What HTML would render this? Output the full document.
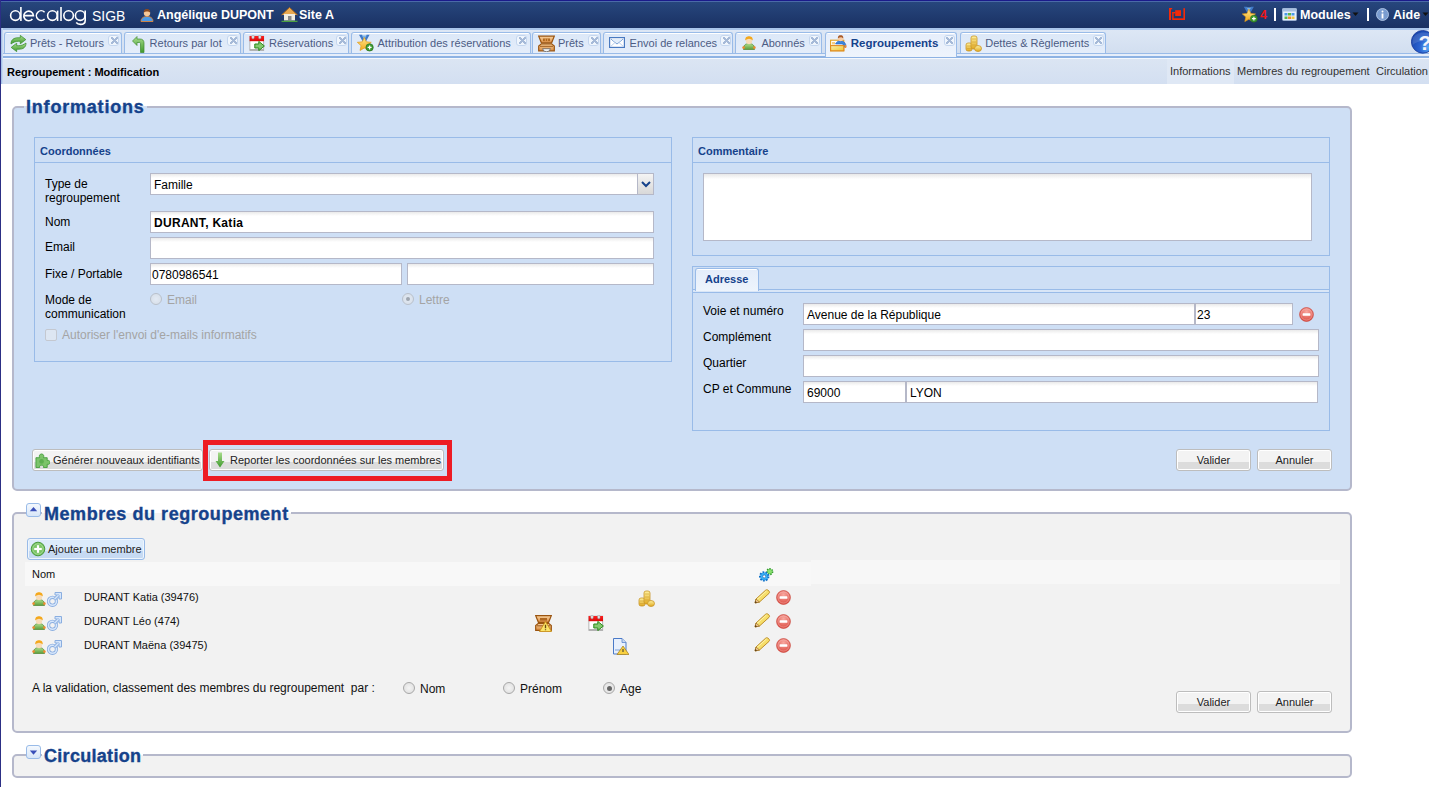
<!DOCTYPE html>
<html><head><meta charset="utf-8">
<style>
*{box-sizing:border-box;margin:0;padding:0}
html,body{width:1429px;height:790px;overflow:hidden;background:#fff;font-family:"Liberation Sans",sans-serif;color:#000}
.a{position:absolute}
.t{position:absolute;white-space:nowrap;line-height:14px}
/* header */
#lb{left:0;top:0;width:1px;height:787px;background:#2c2f85}
#hdr{left:1px;top:0;width:1428px;height:28px;background:linear-gradient(#27477e,#1a3163);border-top:1px solid #1b1b8a}
#hdr2{left:1px;top:1px;width:1428px;height:1px;background:#4a6aa8}
.hw{color:#fff;font-weight:bold;font-size:12.5px;top:8px !important}
/* tabs */
#strip{left:1px;top:28px;width:1428px;height:29px;background:linear-gradient(#a9c5ea 0,#a9c5ea 2px,#dde7f5 2px,#d0ddef 100%)}
.tab{position:absolute;top:32px;height:21px;border:1px solid #99bbe8;border-bottom:none;border-radius:3px 3px 0 0;background:linear-gradient(#fff 0,#fff 1px,#dce8f8 1px,#e4edfa 100%)}
.tab .tx{position:absolute;top:3px;font-size:11px;color:#4c5b84;white-space:nowrap;line-height:14px}
.tab .cl{position:absolute;top:2px;width:11px;height:11px;border:1px solid #c4d6ef;border-radius:3px;background:#f0f6fd}
.tab .cl::after{content:"";position:absolute;left:1.5px;top:1px;width:7px;height:7px;background:linear-gradient(45deg,transparent 39%,#a6bad8 39%,#a6bad8 61%,transparent 61%),linear-gradient(-45deg,transparent 39%,#a6bad8 39%,#a6bad8 61%,transparent 61%)}
#stripb{left:1px;top:53px;width:1428px;height:6px;background:linear-gradient(#99bbe8 0,#99bbe8 1px,#e6eefa 1px,#e6eefa 3px,#8db2e3 3px,#8db2e3 5px,#f4f8fd 5px)}
#sub{left:1px;top:59px;width:1428px;height:25px;background:linear-gradient(#dbe5f3,#d3dff1)}
/* fieldsets */
.fs{position:absolute;border:2px solid #b5b8cb;border-radius:5px}
.lg{position:absolute;font-size:18px;font-weight:bold;color:#15428b;-webkit-text-stroke:0.35px #15428b;white-space:nowrap;line-height:20px;padding:0 2px}
.ifs{position:absolute;border:1px solid #99bbe8}
.ih{position:absolute;left:0;top:24px;width:100%;height:1px;background:#99bbe8}
.iht{position:absolute;left:5px;top:6px;font-size:11px;font-weight:bold;color:#15428b;line-height:14px;white-space:nowrap}
.inp{position:absolute;height:22px;border:1px solid #b5b8c8;background:linear-gradient(#eaeaea 0,#fff 4px,#fff 100%);font-size:12px;line-height:23px;padding-left:3px;white-space:nowrap;overflow:hidden}
.lbl{position:absolute;font-size:12px;line-height:14px;color:#000;white-space:nowrap}
.btn{position:absolute;height:22px;border:1px solid #bdbdbd;border-radius:3px;box-shadow:inset 0 0 0 1px #fff;background:linear-gradient(#f3f3f3 0,#f3f3f3 58%,#dcdcdc 58%,#dcdcdc 100%);font-size:11px;line-height:20px;color:#222;white-space:nowrap;text-align:center}
.ti{position:absolute}
.tab.act{height:25px;z-index:2;background:linear-gradient(#fff 0,#fff 1px,#e6eefb 1px,#eef4fc 100%)}
.tab.act .tx{font-weight:bold;color:#15428b;font-size:11.5px}
.col{position:absolute;width:15px;height:14px;border:1px solid #99bbe8;border-radius:3px;background:linear-gradient(#f4f8fe,#d8e6f8)}
.col svg{position:absolute;left:0;top:0}
.rad{position:absolute;width:12px;height:12px;border-radius:50%;border:1px solid #a8a8a8;background:radial-gradient(#f4f4f4,#dcdcdc)}
</style></head><body>
<svg width="0" height="0" style="position:absolute">
<defs>
<linearGradient id="gg" x1="0" y1="0" x2="0" y2="1"><stop offset="0" stop-color="#a8dc8c"/><stop offset="1" stop-color="#3f9a2e"/></linearGradient>
<linearGradient id="yy" x1="0" y1="0" x2="0" y2="1"><stop offset="0" stop-color="#fff2a0"/><stop offset="1" stop-color="#e0a820"/></linearGradient>
<symbol id="i-sync" viewBox="0 0 17 17"><path d="M1 9 C1 4.5 4 2.8 8 2.8 H10.3 V0.4 L15.8 4.6 L10.3 8.8 V6.3 H8.2 C5.6 6.3 3.5 7.2 1 9Z" fill="url(#gg)" stroke="#3e9030" stroke-width="0.8" stroke-linejoin="round"/><path d="M16 8 C16 12.5 13 14.2 9 14.2 H6.7 V16.6 L1.2 12.4 L6.7 8.2 V10.7 H8.8 C11.4 10.7 13.5 9.8 16 8Z" fill="url(#gg)" stroke="#3e9030" stroke-width="0.8" stroke-linejoin="round"/></symbol>
<symbol id="i-ret" viewBox="0 0 13 17"><path d="M0.5 5 L5 0.5 L5 3 L8 3 C10.5 3 12 4.5 12 7 L12 16.5 L8.5 16.5 L8.5 7.5 C8.5 6.8 8 6.5 7.5 6.5 L5 6.5 L5 9.5Z" fill="url(#gg)" stroke="#3f8a2e" stroke-width="0.7"/></symbol>
<symbol id="i-cal" viewBox="0 0 16 16"><rect x="0.9" y="1.2" width="13.8" height="14.3" fill="#fff" stroke="#a4a4a4" stroke-width="0.8"/><rect x="0.9" y="14" width="13.8" height="1.5" fill="#b0b0b0"/><linearGradient id="cr" x1="0" y1="0" x2="0" y2="1"><stop offset="0" stop-color="#ff2020"/><stop offset="1" stop-color="#d80808"/></linearGradient><rect x="0.6" y="1" width="14.4" height="5.2" fill="url(#cr)"/><rect x="2.8" y="0.2" width="2.4" height="3.6" rx="1" fill="#e4e8ec" stroke="#909090" stroke-width="0.5"/><rect x="9.6" y="0.2" width="2.4" height="3.6" rx="1" fill="#e4e8ec" stroke="#909090" stroke-width="0.5"/><path d="M5.8 9 H9.8 V6.4 L15.4 11 L9.8 15.6 V13 H5.8Z" fill="#86c870" stroke="#2a8a1a" stroke-width="1"/></symbol>
<symbol id="i-star" viewBox="0 0 17 18"><path d="M2 0.8 H5 L7.3 4.5 L9.6 0.8 H12.6 L9.2 7 H5.4 Z" fill="#3f78c8"/><path d="M4.8 1.5 H9.8 L7.3 5.5Z" fill="#7ab4e8"/><linearGradient id="sy" x1="0" y1="0" x2="0" y2="1"><stop offset="0" stop-color="#ffe890"/><stop offset="1" stop-color="#f0a818"/></linearGradient><path d="M7.30 3.30 L9.30 7.85 L14.24 8.34 L10.53 11.65 L11.59 16.51 L7.30 14.00 L3.01 16.51 L4.07 11.65 L0.36 8.34 L5.30 7.85Z" fill="url(#sy)" stroke="#e09a18" stroke-width="0.7" stroke-linejoin="round"/><circle cx="12.6" cy="13.4" r="3.7" fill="#3a9a30" stroke="#2a6a20" stroke-width="0.6"/><path d="M10.6 13.4h4M12.6 11.4v4" stroke="#fff" stroke-width="1.3"/></symbol>
<symbol id="i-trunk" viewBox="0 0 17 16"><linearGradient id="tg" x1="0" y1="0" x2="0" y2="1"><stop offset="0" stop-color="#fad4a0"/><stop offset="1" stop-color="#d88a40"/></linearGradient><path d="M0.7 0.7 H16.3 L13.6 7.3 H3.4 Z" fill="url(#tg)" stroke="#9a5410" stroke-width="1.2"/><rect x="5" y="3" width="7" height="2.6" fill="#b06820"/><path d="M7.3 3v2.6M9.6 3v2.6" stroke="#e8a860" stroke-width="0.8"/><path d="M3.4 8.3 H13.6 L16.3 10.6 V15.3 H0.7 V10.6 Z" fill="url(#tg)" stroke="#9a5410" stroke-width="1.2"/><path d="M2 10.8 H15" stroke="#9a5a20" stroke-width="1"/><path d="M4.6 13.2 H12.4 Q12 16.3 8.5 16.3 Q5 16.3 4.6 13.2Z" fill="#f4f4f4" stroke="#666" stroke-width="0.8"/></symbol>
<symbol id="i-mail" viewBox="0 0 16 11"><rect x="0.6" y="0.6" width="14.8" height="9.8" fill="#fff" stroke="#4a7ac0" stroke-width="1.2"/><path d="M2 2 L8 7 L14 2" fill="none" stroke="#6a96d0" stroke-width="1"/><path d="M2 9.2 L6 5.5 M14 9.2 L10 5.5" stroke="#a8c4ea" stroke-width="0.8"/><path d="M2.5 2 H13.5 L8 6.5Z" fill="#e4eefa"/></symbol>
<symbol id="i-user" viewBox="0 0 15 15"><path d="M0.5 14.5 C0.5 10 3 8.5 7.5 8.5 C12 8.5 14.5 10 14.5 14.5Z" fill="#6ab04a" stroke="#3a7a2a" stroke-width="0.8"/><ellipse cx="7.5" cy="5" rx="3.6" ry="4" fill="#f4c080" stroke="#c07a30" stroke-width="0.6"/><path d="M3.9 4 C4 1 6 0.5 7.5 0.5 C9 0.5 11 1 11.1 4Z" fill="#f09a20"/></symbol>
<symbol id="i-group" viewBox="0 0 17 17"><rect x="0.6" y="5.2" width="13.2" height="10.6" fill="#fff" stroke="#e0a020" stroke-width="1.1"/><path d="M5.5 9 C6.5 6.5 8.5 5.8 10.5 5.8 C12.8 5.8 14.8 6.8 15.8 9.8 L15.8 12 L13 12 L13 9Z" fill="#3a8ae0" stroke="#2a5ab8" stroke-width="0.6"/><rect x="14.6" y="10" width="1.8" height="3" rx="0.8" fill="#f08a30"/><circle cx="10.6" cy="3.6" r="2.6" fill="#f8cca4"/><path d="M7.8 3.4 C7.8 0.8 9.3 0.3 10.6 0.3 C12 0.3 13.4 0.8 13.4 3.4 C12.5 2.4 11.5 2.6 10.6 2.2 C9.7 2.6 8.7 2.4 7.8 3.4Z" fill="#a85a28"/><linearGradient id="fy" x1="0" y1="0" x2="1" y2="1"><stop offset="0" stop-color="#f8f0b0"/><stop offset="1" stop-color="#f0c830"/></linearGradient><rect x="0.6" y="10.6" width="13.2" height="5.2" fill="url(#fy)" stroke="#e08a20" stroke-width="1.1"/><rect x="2" y="7" width="3" height="2.5" fill="#f0c060" opacity="0.8"/></symbol>
<symbol id="i-coins" viewBox="0 0 17 17"><rect x="1" y="8" width="6" height="8" rx="2" fill="url(#yy)" stroke="#c8962a" stroke-width="0.8"/><rect x="6" y="1" width="6" height="13" rx="2" fill="url(#yy)" stroke="#c8962a" stroke-width="0.8"/><ellipse cx="13" cy="13.5" rx="3.5" ry="3" fill="url(#yy)" stroke="#c8962a" stroke-width="0.8"/><path d="M7 4h4M7 7h4M7 10h4M2 11h4M2 13.5h4" stroke="#d0a030" stroke-width="0.6"/></symbol>
<symbol id="i-minus" viewBox="0 0 15 15"><radialGradient id="rg" cx="0.5" cy="0.3" r="0.7"><stop offset="0" stop-color="#f8a8a0"/><stop offset="1" stop-color="#dc4a40"/></radialGradient><circle cx="7.5" cy="7.5" r="6.9" fill="url(#rg)" stroke="#c8443a" stroke-width="0.7"/><circle cx="7.5" cy="7.5" r="5.6" fill="none" stroke="#fff" stroke-width="0.6" opacity="0.45"/><rect x="3.6" y="6.3" width="7.8" height="2.5" rx="0.6" fill="#fff"/></symbol>
<symbol id="i-puzzle" viewBox="0 0 16 16"><path d="M1 5 L5 5 C4 3 5 1 7 1 C9 1 10 3 9 5 L13 5 L13 8 C15 7.5 16 8.5 16 10 C16 11.5 15 12.5 13 12 L13 15.5 L9 15.5 C9.5 13.5 8.5 13 7 13 C5.5 13 4.5 13.5 5 15.5 L1 15.5Z" fill="#7cc46a" stroke="#3e9a36" stroke-width="0.9"/><circle cx="7" cy="9" r="2.5" fill="#4aa040" opacity="0.6"/></symbol>
<symbol id="i-down" viewBox="0 0 10 16"><path d="M3 0.5 L7 0.5 L7 9 L9.5 9 L5 15.5 L0.5 9 L3 9Z" fill="url(#gg)"/></symbol>
<symbol id="i-plus" viewBox="0 0 16 16"><circle cx="8" cy="8" r="6.8" fill="#7ac466" stroke="#4a9a3e" stroke-width="1"/><circle cx="8" cy="8" r="5.2" fill="none" stroke="#a8dc98" stroke-width="0.8"/><rect x="6.9" y="4.2" width="2.2" height="7.6" fill="#fff"/><rect x="4.2" y="6.9" width="7.6" height="2.2" fill="#fff"/></symbol>
<symbol id="i-gear" viewBox="0 0 17 16"><circle cx="11.8" cy="4.6" r="2.6" fill="#6ad050" stroke="#2e9a2a" stroke-width="2" stroke-dasharray="1.3 1"/><circle cx="11.8" cy="4.6" r="2.2" fill="#8ae070"/><circle cx="6.2" cy="9.4" r="4" fill="#2aa0f0" stroke="#1070c8" stroke-width="2.4" stroke-dasharray="1.6 1.2"/><circle cx="6.2" cy="9.4" r="3.3" fill="#3ab0f8"/><circle cx="6.2" cy="9.4" r="1.5" fill="#fff" stroke="#1a5aa8" stroke-width="0.6"/></symbol>
<symbol id="i-male" viewBox="0 0 15 15"><circle cx="5.5" cy="9.3" r="4" fill="none" stroke="#8aaee0" stroke-width="3.2"/><circle cx="5.5" cy="9.3" r="4" fill="none" stroke="#d6e6fb" stroke-width="1.6"/><path d="M7.5 7.3 L11.5 3.3" stroke="#8aaee0" stroke-width="3.2"/><path d="M8 0.5 H14.5 V7 L12 7 L12 3 L8 3Z" fill="#d6e6fb" stroke="#8aaee0" stroke-width="1"/><path d="M7.5 7.3 L11.5 3.3" stroke="#d6e6fb" stroke-width="1.4"/></symbol>
<symbol id="i-pers2" viewBox="0 0 14 14"><linearGradient id="gb" x1="0" y1="0" x2="0" y2="1"><stop offset="0" stop-color="#b4e090"/><stop offset="1" stop-color="#5a9e3c"/></linearGradient><path d="M1.5 13.5 C1 9.5 3.5 7.5 7 7.5 C10.5 7.5 13 9.5 12.5 13.5Z" fill="url(#gb)" stroke="#5a8e3a" stroke-width="0.8"/><circle cx="1.6" cy="11.6" r="1.3" fill="#f08a30"/><circle cx="12.4" cy="11.6" r="1.3" fill="#f08a30"/><rect x="4" y="2.5" width="6" height="5.5" rx="2" fill="#f8dcb8"/><path d="M3.2 4.5 C3.2 1 5 0.3 7 0.3 C9 0.3 10.8 1 10.8 4.5 C9.5 3 8 3.5 7 2.8 C6 3.5 4.5 3 3.2 4.5Z" fill="#f4a81c"/></symbol>
<symbol id="i-pencil" viewBox="0 0 17 15"><path d="M1 14 L2 10 L11.5 1.3 C12.3 0.6 13.3 0.6 14 1.2 L15 2.1 C15.7 2.8 15.7 3.7 15 4.4 L5.5 13Z" fill="#f6de6a" stroke="#b8861e" stroke-width="0.9"/><path d="M3 10.5 L12.5 2" stroke="#fff4b0" stroke-width="1"/><path d="M1 14 L2 10 L5.5 13Z" fill="#f0c890" stroke="#8a5a18" stroke-width="0.6"/><path d="M1 14 L1.5 12 L3 13.5Z" fill="#4a3010"/></symbol>
<symbol id="i-trunkw" viewBox="0 0 17 17"><path d="M0.7 0.7 H16.3 L13.6 7.3 H3.4 Z" fill="url(#tg)" stroke="#9a5410" stroke-width="1.2"/><rect x="5" y="3" width="7" height="2.6" fill="#b06820"/><path d="M3.4 8.3 H13.6 L16.3 10.6 V15.3 H0.7 V10.6 Z" fill="url(#tg)" stroke="#9a5410" stroke-width="1.2"/><path d="M2 10.8 H15" stroke="#9a5a20" stroke-width="1"/><path d="M10.5 6.5 L16.5 16.5 H4.5 Z" fill="#fbe46a" stroke="#c8901a" stroke-width="0.9"/><path d="M10.5 9.8v3.4M10.5 14.2v1" stroke="#6a4a10" stroke-width="1.3"/></symbol>
<symbol id="i-docw" viewBox="0 0 16 17"><path d="M0.5 0.5 L9 0.5 L13 4.5 L13 16 L0.5 16Z" fill="#e8f0fc" stroke="#4a7ac8"/><path d="M9 0.5 L9 4.5 L13 4.5" fill="#c8d8f0" stroke="#4a7ac8" stroke-width="0.7"/><path d="M2 12h5" stroke="#7aa0d8"/><path d="M10 8 L16 16.5 L4 16.5Z" fill="#f8d040" stroke="#a07818" stroke-width="0.7"/><path d="M10 11v3" stroke="#333"/></symbol>
<symbol id="i-person" viewBox="0 0 14 14"><path d="M1 13.5 C1 10 3.5 8.5 7 8.5 C10.5 8.5 13 10 13 13.5Z" fill="#4a9ae8" stroke="#f08a30" stroke-width="0.8"/><circle cx="7" cy="5" r="3.2" fill="#f6c898"/><path d="M3.8 4.5 C3.8 1.5 5.5 1 7 1 C8.5 1 10.2 1.5 10.2 4.5 C9 3 5 3 3.8 4.5Z" fill="#8a4a20"/></symbol>
<symbol id="i-house" viewBox="0 0 17 15"><path d="M0.5 8 L8.5 0.5 L16.5 8" fill="#e8a850" stroke="#a86820" stroke-width="1"/><rect x="3" y="7" width="11" height="6.5" fill="#f0ece0"/><rect x="7" y="9" width="3.5" height="4.5" fill="#888"/><path d="M0.5 14.5 H16.5" stroke="#4aa040" stroke-width="1.5"/></symbol>
</defs></svg>

<div class="a" id="lb"></div>
<div class="a" id="hdr"></div>
<div class="a" id="hdr2"></div>
<svg class="a" style="left:0;top:0" width="90" height="28"><g fill="none" stroke="#fff" stroke-width="1.6">
<circle cx="15.4" cy="15.6" r="4.8"/><path d="M20.9 7 V21"/>
<path d="M23.9 15.6 H33.4 A4.8 4.8 0 1 0 32.4 18.9"/>
<path d="M44.6 12.2 A4.8 4.8 0 1 0 44.6 19"/>
<circle cx="52.4" cy="15.6" r="4.8"/><path d="M57.6 10.6 V21"/>
<path d="M61 7 V21"/>
<circle cx="68.6" cy="15.6" r="4.8"/>
<circle cx="80.2" cy="15.6" r="4.8"/><path d="M85.2 10.6 V20.5 C85.2 23.4 83 24.4 80.5 24.4 C78.5 24.4 77 23.6 76.2 22.6"/>
</g></svg>
<div class="t" style="left:92px;top:8px;font-size:14px;color:#fff;line-height:16px">SIGB</div>
<div class="t hw" style="left:157px;top:7px">Angélique DUPONT</div>
<div class="t hw" style="left:299px;top:7px">Site A</div>
<div class="t hw" style="left:1300px;top:7px">Modules</div>
<div class="t hw" style="left:1393px;top:7px">Aide</div>


<svg class="a" style="left:140px;top:8px" width="14" height="14"><use href="#i-person"/></svg>
<svg class="a" style="left:281px;top:7px" width="17" height="15"><use href="#i-house"/></svg>
<svg class="a" style="left:1168px;top:7px" width="18" height="14"><g fill="#f42a08"><rect x="1" y="1.2" width="2" height="11.8"/><rect x="1" y="1" width="3.2" height="1.3"/><rect x="4.2" y="11.3" width="12.8" height="1.7"/><rect x="15.4" y="1.2" width="1.6" height="11.8"/><rect x="4.2" y="5" width="1.4" height="7"/><rect x="4.2" y="5" width="3.2" height="1.4"/><rect x="7.2" y="3.2" width="5.8" height="5.8"/></g></svg>
<svg class="a" style="left:1241px;top:6px" width="18" height="17"><use href="#i-star"/></svg>
<div class="t" style="left:1260px;top:8px;font-size:12.5px;font-weight:bold;color:#f01818">4</div>
<div class="a" style="left:1274px;top:8px;width:2px;height:13px;background:#fff"></div>
<svg class="a" style="left:1282px;top:8px" width="15" height="13"><rect x="0.5" y="0.5" width="14" height="12" rx="1" fill="#e8f0fa" stroke="#9ab0d0"/><rect x="0.5" y="0.5" width="14" height="3" fill="#a8c0e0"/><rect x="2.5" y="5" width="3" height="2.5" fill="#4a9ae8"/><rect x="6" y="5" width="3" height="2.5" fill="#5ab848"/><rect x="9.5" y="5" width="3" height="2.5" fill="#4a9ae8"/><rect x="2.5" y="8.5" width="3" height="2.5" fill="#5ab848"/><rect x="6" y="8.5" width="3" height="2.5" fill="#f08a30"/><rect x="9.5" y="8.5" width="3" height="2.5" fill="#f0c840"/></svg>
<svg class="a" style="left:1352px;top:12px" width="7" height="5"><path d="M0.5 0.5 H6.5 L3.5 4Z" fill="#111"/></svg>
<div class="a" style="left:1367px;top:8px;width:2px;height:13px;background:#fff"></div>
<svg class="a" style="left:1376px;top:8px" width="13" height="13"><circle cx="6.5" cy="6.5" r="6" fill="#7a9cd0" stroke="#c0d4f0" stroke-width="0.8"/><rect x="5.6" y="5.5" width="1.8" height="5" fill="#fff"/><circle cx="6.5" cy="3.6" r="1" fill="#fff"/></svg>
<svg class="a" style="left:1422px;top:12px" width="7" height="5"><path d="M0.5 0.5 H6.5 L3.5 4Z" fill="#111"/></svg>
<div class="a" id="strip"></div>
<div class="a" id="stripb"></div>
<div class="tab" style="left:4px;width:118px"><svg class="ti" style="left:5px;top:2px" width="17" height="17"><use href="#i-sync"/></svg><span class="tx" style="left:25px">Prêts - Retours</span><span class="cl" style="left:103px"></span></div>
<div class="tab" style="left:124px;width:117px"><svg class="ti" style="left:7px;top:3px" width="13" height="17"><use href="#i-ret"/></svg><span class="tx" style="left:24.6px">Retours par lot</span><span class="cl" style="left:102px"></span></div>
<div class="tab" style="left:243px;width:106px"><svg class="ti" style="left:5px;top:2px" width="16" height="16"><use href="#i-cal"/></svg><span class="tx" style="left:25px">Réservations</span><span class="cl" style="left:92px"></span></div>
<div class="tab" style="left:351px;width:180px"><svg class="ti" style="left:5px;top:1px" width="17" height="18"><use href="#i-star"/></svg><span class="tx" style="left:25.5px">Attribution des réservations</span><span class="cl" style="left:164px"></span></div>
<div class="tab" style="left:532px;width:69px"><svg class="ti" style="left:5px;top:2px" width="17" height="17"><use href="#i-trunk"/></svg><span class="tx" style="left:25px">Prêts</span><span class="cl" style="left:55px"></span></div>
<div class="tab" style="left:603px;width:130px"><svg class="ti" style="left:5px;top:4px" width="16" height="11"><use href="#i-mail"/></svg><span class="tx" style="left:25.6px">Envoi de relances</span><span class="cl" style="left:116px"></span></div>
<div class="tab" style="left:735px;width:87px"><svg class="ti" style="left:6px;top:3px" width="14" height="14"><use href="#i-pers2"/></svg><span class="tx" style="left:25.4px">Abonnés</span><span class="cl" style="left:72.5px"></span></div>
<div class="tab act" style="left:825px;width:132px"><svg class="ti" style="left:4px;top:2px" width="17" height="17"><use href="#i-group"/></svg><span class="tx" style="left:24.8px">Regroupements</span><span class="cl" style="left:117.5px"></span></div>
<div class="tab" style="left:960px;width:146px"><svg class="ti" style="left:4px;top:1.5px" width="17" height="17"><use href="#i-coins"/></svg><span class="tx" style="left:24.3px">Dettes &amp; Règlements</span><span class="cl" style="left:131.5px"></span></div>

<svg class="a" style="left:1411px;top:30px;z-index:3" width="18" height="24"><defs><radialGradient id="hb" cx="0.75" cy="0.75" r="0.8"><stop offset="0" stop-color="#5aaef8"/><stop offset="0.5" stop-color="#2a62d0"/><stop offset="1" stop-color="#1a48b0"/></radialGradient></defs><circle cx="11.8" cy="11.8" r="11.4" fill="url(#hb)" stroke="#1a3a98" stroke-width="0.8"/><path d="M1.5 9 C4 3 12 1 20 4 L20 12 C13 10 6 11 1.5 15Z" fill="#fff" opacity="0.12"/><text x="7.6" y="19.8" font-family="Liberation Sans" font-weight="bold" font-size="21" fill="#f4f4fa">?</text></svg>
<div class="a" id="sub"></div><div class="a" style="left:1px;top:28px;width:2px;height:56px;background:linear-gradient(90deg,#a6c2e8 1px,#c4d8f0 1px)"></div>
<div class="t" style="left:7px;top:65px;font-size:11px;font-weight:bold;color:#000">Regroupement : Modification</div>
<div class="a" style="left:1167px;top:59px;width:67px;height:25px;background:#dfe8f5"></div><div class="t" style="left:1170px;top:64px;font-size:11px;color:#333">Informations</div>
<div class="t" style="left:1237px;top:64px;font-size:11px;color:#333">Membres du regroupement</div>
<div class="t" style="left:1376px;top:64px;font-size:11px;color:#333">Circulation</div>

<!-- Informations fieldset -->
<div class="fs" style="left:12px;top:106px;width:1340px;height:385px;background:#cedff5"></div>
<div class="lg" style="left:24px;top:97px;letter-spacing:0.8px;background:linear-gradient(#fff 0,#fff 9px,#cedff5 9px)">Informations</div>


<!-- Coordonnees -->
<div class="ifs" style="left:34px;top:137px;width:638px;height:225px"><div class="ih"></div><div class="iht">Coordonnées</div></div>
<div class="lbl" style="left:45px;top:177px">Type de<br>regroupement</div>
<div class="inp" style="left:150px;top:173px;width:504px">Famille</div>
<div class="a" style="left:637px;top:174px;width:16px;height:20px;border-left:1px solid #b5b8c8;background:linear-gradient(#f4f4f4,#d8d8d8)"><svg width="16" height="19" style="position:absolute;left:0;top:0"><path d="M4 8 L8 12 L12 8" fill="none" stroke="#15428b" stroke-width="2"/></svg></div>
<div class="lbl" style="left:45px;top:215px">Nom</div>
<div class="inp" style="left:150px;top:211px;width:504px;font-weight:bold;letter-spacing:0.3px">DURANT, Katia</div>
<div class="lbl" style="left:45px;top:240px">Email</div>
<div class="inp" style="left:150px;top:237px;width:504px"></div>
<div class="lbl" style="left:45px;top:267px">Fixe / Portable</div>
<div class="inp" style="left:150px;top:263px;width:252px;padding-left:1px">0780986541</div>
<div class="inp" style="left:407px;top:263px;width:247px"></div>
<div class="lbl" style="left:45px;top:293px">Mode de<br>communication</div>
<div class="rad" style="left:150px;top:293px;opacity:.55"></div>
<div class="lbl" style="left:167px;top:293px;color:#a4a4a4">Email</div>
<div class="rad" style="left:402px;top:293px;opacity:.55"><div style="position:absolute;left:3px;top:3px;width:4px;height:4px;border-radius:50%;background:#777"></div></div>
<div class="lbl" style="left:419px;top:293px;color:#a4a4a4">Lettre</div>
<div class="a" style="left:45px;top:329px;width:12px;height:12px;border:1px solid #c4c8d0;border-radius:2px;background:#dde6f2"></div>
<div class="lbl" style="left:62px;top:328px;color:#a4a4a4">Autoriser l'envoi d'e-mails informatifs</div>

<!-- Commentaire -->
<div class="ifs" style="left:692px;top:137px;width:638px;height:119px"><div class="ih"></div><div class="iht">Commentaire</div></div>
<div class="inp" style="left:703px;top:173px;width:609px;height:68px;background:linear-gradient(#e8e8e8 0,#fff 5px,#fff 100%)"></div>

<!-- Adresse -->
<div class="ifs" style="left:692px;top:266px;width:638px;height:165px"></div>
<div class="a" style="left:693px;top:289px;width:636px;height:4px;background:linear-gradient(#99bbe8 0,#99bbe8 1px,#d9e6f7 1px,#d9e6f7 3px,#99bbe8 3px)"></div>
<div class="a" style="left:695px;top:268px;width:64px;height:23px;border:1px solid #99bbe8;border-bottom:none;border-radius:3px 3px 0 0;background:linear-gradient(#fff 0,#fff 1px,#e4edfa 1px,#eef4fc 100%)"></div>
<div class="t" style="left:705px;top:272px;font-size:11px;font-weight:bold;color:#15428b">Adresse</div>
<div class="lbl" style="left:703px;top:304px">Voie et numéro</div>
<div class="inp" style="left:803px;top:303px;width:392px">Avenue de la République</div>
<div class="inp" style="left:1195px;top:303px;width:98px;padding-left:1px">23</div>
<svg class="a" style="left:1299px;top:307px" width="15" height="15"><use href="#i-minus"/></svg>
<div class="lbl" style="left:703px;top:330px">Complément</div>
<div class="inp" style="left:803px;top:329px;width:516px"></div>
<div class="lbl" style="left:703px;top:356px">Quartier</div>
<div class="inp" style="left:803px;top:355px;width:516px"></div>
<div class="lbl" style="left:703px;top:382px">CP et Commune</div>
<div class="inp" style="left:803px;top:381px;width:103px">69000</div>
<div class="inp" style="left:906px;top:381px;width:412px">LYON</div>

<!-- buttons -->
<div class="btn" style="left:32px;top:449px;width:171px;text-align:left;padding-left:20px">Générer nouveaux identifiants</div>
<svg class="a" style="left:35px;top:453px" width="15" height="15"><use href="#i-puzzle"/></svg>
<div class="btn" style="left:209px;top:449px;width:235px;text-align:left;padding-left:20px">Reporter les coordonnées sur les membres</div>
<svg class="a" style="left:215px;top:452px" width="10" height="16"><use href="#i-down"/></svg>
<div class="a" style="left:203px;top:440px;width:249px;height:41px;border:5px solid #ed1c24"></div>
<div class="btn" style="left:1176px;top:449px;width:75px">Valider</div>
<div class="btn" style="left:1257px;top:449px;width:75px">Annuler</div>

<!-- Membres -->
<div class="fs" style="left:12px;top:512px;width:1340px;height:221px;background:#f2f2f2"></div>
<div class="lg" style="left:42px;top:504px;letter-spacing:0.55px;background:linear-gradient(#fff 0,#fff 9px,#f2f2f2 9px)">Membres du regroupement</div>
<div class="col" style="left:26px;top:503px"><svg width="13" height="13"><path d="M2.8 7.2 L6.5 3 L10.2 7.2Z" fill="#3a4fb8"/></svg></div>
<div class="a" style="left:27px;top:538px;width:118px;height:22px;border:1px solid #99bbe8;border-radius:3px;box-shadow:inset 0 0 0 1px #eef5fd;background:linear-gradient(#dcebfb 0,#dcebfb 58%,#c6daf3 58%,#c6daf3 100%)"></div>
<svg class="a" style="left:30px;top:541px" width="16" height="16"><use href="#i-plus"/></svg>
<div class="t" style="left:48px;top:542px;font-size:11px;color:#222">Ajouter un membre</div>
<div class="a" style="left:25px;top:562px;width:786px;height:24px;background:#f8f8f8"></div>
<div class="a" style="left:811px;top:560px;width:529px;height:24px;background:#f7f7f7"></div>
<div class="t" style="left:32px;top:567px;font-size:11px;color:#111">Nom</div>
<svg class="a" style="left:758px;top:567px" width="17" height="16"><use href="#i-gear"/></svg>
<svg class="a" style="left:32px;top:592px" width="14" height="14"><use href="#i-pers2"/></svg><svg class="a" style="left:47px;top:592px" width="15" height="15"><use href="#i-male"/></svg><div class="t" style="left:84px;top:590px;font-size:11px;color:#111">DURANT Katia (39476)</div><svg class="a" style="left:754px;top:589px" width="17" height="15"><use href="#i-pencil"/></svg><svg class="a" style="left:776px;top:590px" width="15" height="15"><use href="#i-minus"/></svg>
<svg class="a" style="left:32px;top:616px" width="14" height="14"><use href="#i-pers2"/></svg><svg class="a" style="left:47px;top:616px" width="15" height="15"><use href="#i-male"/></svg><div class="t" style="left:84px;top:614px;font-size:11px;color:#111">DURANT Léo (474)</div><svg class="a" style="left:754px;top:613px" width="17" height="15"><use href="#i-pencil"/></svg><svg class="a" style="left:776px;top:614px" width="15" height="15"><use href="#i-minus"/></svg>
<svg class="a" style="left:32px;top:640px" width="14" height="14"><use href="#i-pers2"/></svg><svg class="a" style="left:47px;top:640px" width="15" height="15"><use href="#i-male"/></svg><div class="t" style="left:84px;top:638px;font-size:11px;color:#111">DURANT Maëna (39475)</div><svg class="a" style="left:754px;top:637px" width="17" height="15"><use href="#i-pencil"/></svg><svg class="a" style="left:776px;top:638px" width="15" height="15"><use href="#i-minus"/></svg>

<svg class="a" style="left:638px;top:590px" width="17" height="17"><use href="#i-coins"/></svg>
<svg class="a" style="left:535px;top:615px" width="17" height="17"><use href="#i-trunkw"/></svg>
<svg class="a" style="left:588px;top:615px" width="16" height="16"><use href="#i-cal"/></svg>
<svg class="a" style="left:613px;top:638px" width="16" height="17"><use href="#i-docw"/></svg>
<div class="t" style="left:32px;top:681px;font-size:12px;color:#111">A la validation, classement des membres du regroupement&nbsp; par :</div>
<div class="rad" style="left:403px;top:682px"></div><div class="t" style="left:420px;top:682px;font-size:12px;color:#111">Nom</div>
<div class="rad" style="left:503px;top:682px"></div><div class="t" style="left:520px;top:682px;font-size:12px;color:#111">Prénom</div>
<div class="rad" style="left:603px;top:682px"><div style="position:absolute;left:2.5px;top:2.5px;width:5px;height:5px;border-radius:50%;background:#666"></div></div><div class="t" style="left:620px;top:682px;font-size:12px;color:#111">Age</div>
<div class="btn" style="left:1176px;top:691px;width:75px">Valider</div>
<div class="btn" style="left:1257px;top:691px;width:75px">Annuler</div>

<!-- Circulation -->
<div class="fs" style="left:12px;top:754px;width:1340px;height:24px;background:#f2f2f2"></div>
<div class="lg" style="left:42px;top:746px;letter-spacing:0.3px;background:linear-gradient(#fff 0,#fff 9px,#f2f2f2 9px)">Circulation</div>
<div class="col" style="left:26px;top:745px"><svg width="13" height="13"><path d="M2.8 4.5 L6.5 8.7 L10.2 4.5Z" fill="#3a4fb8"/></svg></div>
</body></html>
